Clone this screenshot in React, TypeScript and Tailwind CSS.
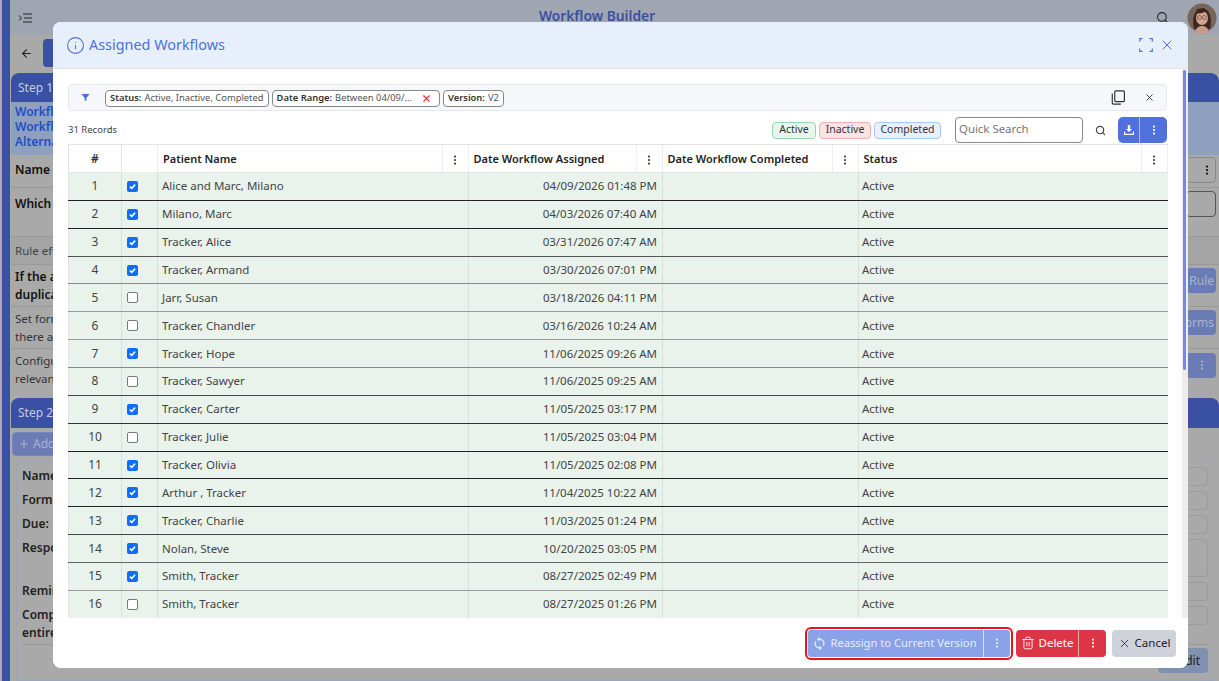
import React from "react";
import { ArrowLeft, EllipsisVertical, Info, Plus, Search, Trash2, X } from "lucide-react";
import { MdSync } from "react-icons/md";

const rows = [
  { name: "Alice and Marc, Milano", date: "04/09/2026 01:48 PM", checked: true, line: "border-b-[#222]" },
  { name: "Milano, Marc", date: "04/03/2026 07:40 AM", checked: true, line: "border-b-[#222]" },
  { name: "Tracker, Alice", date: "03/31/2026 07:47 AM", checked: true, line: "border-b-[#555]" },
  { name: "Tracker, Armand", date: "03/30/2026 07:01 PM", checked: true, line: "border-b-[#888]" },
  { name: "Jarr, Susan", date: "03/18/2026 04:11 PM", checked: false, line: "border-b-[#999]" },
  { name: "Tracker, Chandler", date: "03/16/2026 10:24 AM", checked: false, line: "border-b-[#999]" },
  { name: "Tracker, Hope", date: "11/06/2025 09:26 AM", checked: true, line: "border-b-[#888]" },
  { name: "Tracker, Sawyer", date: "11/06/2025 09:25 AM", checked: false, line: "border-b-[#444]" },
  { name: "Tracker, Carter", date: "11/05/2025 03:17 PM", checked: true, line: "border-b-[#333]" },
  { name: "Tracker, Julie", date: "11/05/2025 03:04 PM", checked: false, line: "border-b-[#222]" },
  { name: "Tracker, Olivia", date: "11/05/2025 02:08 PM", checked: true, line: "border-b-[#222]" },
  { name: "Arthur , Tracker", date: "11/04/2025 10:22 AM", checked: true, line: "border-b-[#222]" },
  { name: "Tracker, Charlie", date: "11/03/2025 01:24 PM", checked: true, line: "border-b-[#444]" },
  { name: "Nolan, Steve", date: "10/20/2025 03:05 PM", checked: true, line: "border-b-[#666]" },
  { name: "Smith, Tracker", date: "08/27/2025 02:49 PM", checked: true, line: "border-b-[#999]" },
  { name: "Smith, Tracker", date: "08/27/2025 01:26 PM", checked: false, line: "border-b-transparent" },
];

// right hand fields of the step 2 card, mostly covered by the modal
const stepFields = [
  { label: "Name", height: "h-[19px]" },
  { label: "Form", height: "h-[19px]" },
  { label: "Due:", height: "h-[19px]" },
  { label: "Respo", height: "h-[38px]" },
  { label: "Remin", height: "h-[19px]" },
  { label: "Comp", second: "entire", height: "h-[19px]" },
];

function Kebab({ className = "" }: { className?: string }) {
  return <EllipsisVertical className={`h-3 w-3 ${className}`} strokeWidth={2.5} />;
}

function Checkbox({ checked }: { checked: boolean }) {
  if (!checked) {
    return <span className="ml-[5px] block h-[11px] w-[11px] rounded-[2px] border border-[#777] bg-white" />;
  }
  return (
    <span className="ml-[5px] flex h-[11px] w-[11px] items-center justify-center rounded-[2px] bg-[#0d6efd]">
      <svg viewBox="0 0 12 12" className="h-[9px] w-[9px]" fill="none" stroke="white" strokeWidth="2">
        <path d="M2.5 6.2 5 8.5l4.5-5" />
      </svg>
    </span>
  );
}

function HeaderCell({ title }: { title: string }) {
  return (
    <th className="h-[28px] border-b border-[#e2e5e8] bg-white p-0 text-left font-semibold">
      <div className="flex h-[27px] items-center">
        <span className="min-w-0 flex-1 truncate pl-[5px] text-[11px] text-[#222]">{title}</span>
        <span className="flex h-full w-[27px] items-center justify-center border-l border-r border-[#eceef0] text-[#444]">
          <Kebab className="mt-[3px]" />
        </span>
      </div>
    </th>
  );
}

function Chip({ label, value, onClear }: { label: string; value: string; onClear?: boolean }) {
  return (
    <span className="flex h-[17px] items-center rounded-[4px] border border-[#888] bg-white px-[4px] text-[9.4px] whitespace-nowrap text-[#555]">
      <b className="mr-[3px] font-semibold text-[#333]">{label}</b>
      {value}
      {onClear && <X className="ml-[9px] mr-[3px] h-[11px] w-[11px] text-[#e8343c]" strokeWidth={2.5} />}
    </span>
  );
}

function Background() {
  return (
    <div className="flex h-full w-full bg-[#a9a9a9]">
      <div className="ml-[2px] w-[8px] shrink-0 bg-[#3a50a3]" />
      <div className="flex min-w-0 flex-1 flex-col">
        <div className="flex h-[35px] shrink-0 items-center bg-[#9fa6b2] pl-[8px] pr-[2px]">
          <svg viewBox="0 0 14 10" className="h-[10px] w-[14px]" fill="none" stroke="#222" strokeWidth="1">
            <path d="M1 2.5 3.5 5 1 7.5M5 1h9M6 5h8M5 9h9" />
          </svg>
          <span className="flex-1 pb-[3px] pl-[6px] text-center text-[13.8px] font-semibold text-[#3a50a3]">Workflow Builder</span>
          <Search className="mr-[18px] h-[13px] w-[13px] text-[#222]" />
          <svg viewBox="0 0 30 30" className="h-[30px] w-[30px]">
            <circle cx="15" cy="15" r="14.5" fill="#77655a" />
            <path d="M7 26c-2-8-1-20 8-20s10 12 8 20z" fill="#3c2620" />
            <ellipse cx="15" cy="15" rx="6" ry="7" fill="#d6a48d" />
            <path d="M9 10c3 1 8 0 10-2 1 2 2 3 2 5l1-4-5-4-7 1z" fill="#3c2620" />
            <path d="M8 30c1-6 4-7 7-7s6 1 7 7z" fill="#c99a87" />
            <circle cx="12.5" cy="14.5" r="2" fill="none" stroke="#4a3a36" strokeWidth=".6" />
            <circle cx="17.5" cy="14.5" r="2" fill="none" stroke="#4a3a36" strokeWidth=".6" />
          </svg>
        </div>
        <div className="flex h-[36px] shrink-0 items-center pl-[10px]">
          <ArrowLeft className="h-[13px] w-[13px] text-[#222]" />
          <span className="ml-[10px] h-[28px] w-[20px] rounded-[4px] bg-[#3a50a3]" />
        </div>
        <div className="mt-[2px] flex h-[321px] shrink-0 flex-col overflow-hidden rounded-t-[8px] pl-px">
          <div className="flex h-[29px] shrink-0 items-center rounded-t-[8px] bg-[#3a50a3] pl-[7px] text-[12px] text-[#c3cbe4]">Step 1:</div>
          <div className="h-[53px] shrink-0 bg-[#8f9fc0] pl-[4px] pt-[2px] text-[12px] leading-[15px] font-semibold text-[#1c4fc0]">
            <p>Workflow</p>
            <p>Workflow</p>
            <p>Alternate</p>
          </div>
          <div className="flex h-[33px] shrink-0 items-center justify-between border-b border-[#999] pb-[2px] pl-[4px] text-[12px] font-semibold text-[#111]">
            <span>Name of</span>
            <span className="mr-[3px] flex h-[26px] w-[30px] items-center justify-end rounded-[4px] border border-[#888] pr-[2px]">
              <Kebab />
            </span>
          </div>
          <div className="flex h-[33px] shrink-0 items-center justify-between pb-[2px] pl-[4px] text-[12px] font-semibold text-[#111]">
            <span>Which f</span>
            <span className="mr-[3px] h-[26px] w-[30px] rounded-[4px] border border-[#555]" />
          </div>
          <div className="h-[15px] shrink-0" />
          <div className="flex h-[29px] shrink-0 items-center border-y border-[#999] bg-[#a4a4a4] pl-[4px] text-[11.5px] text-[#444]">Rule eff</div>
          <div className="flex h-[42px] shrink-0 items-center justify-between border-b border-[#999] pl-[4px] text-[12px] leading-[18px] font-semibold text-[#111]">
            <span>
              If the ac
              <br />
              duplicat
            </span>
            <span className="mb-[10px] mr-[3px] flex h-[25px] w-[30px] items-center justify-end rounded-[4px] bg-[#6b7cb4] pr-[2px] text-[12px] font-normal text-[#a9b2d0]">Rule</span>
          </div>
          <div className="flex h-[42px] shrink-0 items-center justify-between border-b border-[#999] pl-[4px] text-[11.5px] leading-[18px] text-[#333]">
            <span>
              Set form
              <br />
              there ar
            </span>
            <span className="mb-[10px] mr-[3px] flex h-[25px] w-[30px] items-center justify-end overflow-hidden rounded-[4px] bg-[#6b7cb4] pr-[2px] text-[12px] text-[#a9b2d0]">orms</span>
          </div>
          <div className="flex h-[42px] shrink-0 items-center justify-between pl-[4px] text-[11.5px] leading-[18px] text-[#333]">
            <span>
              Configu
              <br />
              relevant
            </span>
            <span className="mb-[10px] mr-[3px] flex h-[25px] w-[30px] items-center justify-end rounded-[4px] bg-[#6b7cb4] pr-[8px] text-[#a9b2d0]">
              <Kebab />
            </span>
          </div>
        </div>
        <div className="mt-[4px] flex min-h-0 flex-1 flex-col pl-px">
          <div className="flex h-[30px] shrink-0 items-center rounded-t-[8px] bg-[#3a50a3] pl-[7px] text-[12px] text-[#c3cbe4]">Step 2:</div>
          <div className="flex h-[31px] shrink-0 items-center pl-px">
            <span className="flex h-[24px] w-[60px] items-center rounded-[4px] border border-[#7a88b8] bg-[#6b7cb4] pl-[5px] text-[12px] text-[#a9b2d0]">
              <Plus className="mr-[3px] h-[12px] w-[12px]" />
              Add
            </span>
          </div>
          <div className="mx-[5px] mt-px flex flex-1 flex-col rounded-t-[6px] border border-[#9aa5ba] px-[5px] pt-[6px] text-[12px] font-semibold text-[#222]">
            {stepFields.map((field) => (
              <div key={field.label} className="mb-[5px] flex items-start justify-between leading-[18px]">
                <span className="h-0">
                  {field.label}
                  {field.second && (
                    <>
                      <br />
                      {field.second}
                    </>
                  )}
                </span>
                <span className={`w-[50px] rounded-[4px] border border-[#9c9c9c] ${field.height}`} />
              </div>
            ))}
            <div className="mt-[14px] border-t border-[#999]" />
            <div className="mt-[3px] flex justify-end">
              <span className="flex h-[25px] w-[50px] items-center justify-end rounded-[4px] bg-[#7f90b0] pr-[8px] font-normal text-[#222]">Edit</span>
            </div>
          </div>
        </div>
      </div>
    </div>
  );
}

export default function App() {
  return (
    <div className="relative h-screen w-full overflow-hidden font-['Noto_Sans',sans-serif]">
      <Background />
      <div className="absolute left-[53px] top-[22px] flex h-[646px] w-[1135px] flex-col overflow-hidden rounded-[8px] bg-white">
        <div className="flex h-[47px] shrink-0 items-center border-b border-[#dfe3ea] bg-[#e8effc] pl-[13px] pr-[13px]">
          <Info className="h-[19px] w-[19px] text-[#4f70dd]" strokeWidth={1.4} />
          <span className="ml-[4px] flex-1 text-[14.4px] text-[#4f70dd]">Assigned Workflows</span>
          <svg viewBox="0 0 14 14" className="h-[14px] w-[14px]" fill="none" stroke="#4f70dd" strokeWidth="1.2">
            <path d="M.7 3.5V.7h2.8M10.500 .7h2.8v2.800M13.300 10.500v2.800h-2.800M3.500 13.300H.7v-2.800" />
          </svg>
          <X className="ml-[6px] h-[16px] w-[16px] text-[#4f70dd]" strokeWidth={1.5} />
        </div>

        <div className="relative flex min-h-0 flex-1 flex-col pl-[15px] pr-[21px]">
          <div className="absolute bottom-0 right-0 top-0 w-[6px] bg-[#f1ebeb]">
            <div className="ml-[1px] mt-[1px] h-[300px] w-[3px] rounded-full bg-[#6f8be8]" />
          </div>

          <div className="mt-[15px] flex h-[27px] shrink-0 items-center rounded-[4px] border border-[#e6e8ec] bg-[#f6f7fb] pl-[12px] pr-[12px]">
            <svg viewBox="0 0 10 10" className="mr-[15px] h-[9px] w-[9px]" fill="#4f70dd">
              <path d="M.5 1h9L6 5.500V9L4 8V5.500z" />
            </svg>
            <div className="mt-px flex flex-1 items-center gap-[3px]">
              <Chip label="Status:" value="Active, Inactive, Completed" />
              <Chip label="Date Range:" value="Between 04/09/..." onClear />
              <Chip label="Version:" value="V2" />
            </div>
            <svg viewBox="0 0 14 14" className="mr-[18px] h-[15px] w-[15px]" fill="none" stroke="#333" strokeWidth="1.1">
              <rect x="3.5" y=".8" width="9" height="10" rx="1" />
              <path d="M1.2 3.2v9a1 1 0 0 0 1 1h7" />
            </svg>
            <X className="mr-[-1px] h-[11px] w-[11px] text-[#333]" />
          </div>

          <div className="mb-px mt-[6px] flex h-[26px] shrink-0 items-center">
            <span className="flex-1 text-[9.5px] text-[#444]">31 Records</span>
            <div className="mr-[14px] flex items-center gap-[3px] text-[10.5px] text-[#333]">
              <span className="flex h-[17px] w-[44px] items-center justify-center rounded-[4px] border border-[#9bd3ae] bg-[#e9f6ee]">Active</span>
              <span className="flex h-[17px] w-[52px] items-center justify-center rounded-[4px] border border-[#efb0b0] bg-[#fbe3e3]">Inactive</span>
              <span className="flex h-[17px] w-[67px] items-center justify-center rounded-[4px] border border-[#a9c8f5] bg-[#e7f0fd]">Completed</span>
            </div>
            <input
              readOnly
              placeholder="Quick Search"
              className="h-[26px] w-[128px] rounded-[4px] border border-[#888] bg-white px-[3px] pb-[3px] text-[11.4px] outline-none placeholder:text-[#777]"
            />
            <Search className="ml-[12px] mr-[12px] h-[11px] w-[11px] text-[#444]" strokeWidth={2.5} />
            <div className="flex h-[26px] w-[49px] overflow-hidden rounded-[5px] bg-[#4f70dd] text-white">
              <span className="flex w-[22px] items-center justify-center border-r border-[#a9baf0]">
                <svg viewBox="0 0 12 12" className="h-[12px] w-[12px]" fill="white">
                  <path d="M4.800 1h2.400v4H9L6 8 3 5h1.800zM1 7.500h1.200v2.300h7.600V7.500H11V11H1z" />
                </svg>
              </span>
              <span className="flex flex-1 items-center justify-center">
                <Kebab />
              </span>
            </div>
          </div>

          <table className="w-[1099px] table-fixed border-collapse border-l border-t border-[#e2e5e8] text-[11.5px] leading-[16px] text-[#444]">
            <colgroup>
              <col className="w-[53px]" />
              <col className="w-[36px]" />
              <col className="w-[311px]" />
              <col className="w-[194px]" />
              <col className="w-[196px]" />
              <col className="w-[309px]" />
            </colgroup>
            <thead>
              <tr>
                <th className="h-[28px] border-b border-r border-[#e2e5e8] bg-white p-0 text-center text-[12px] font-semibold text-[#333]">#</th>
                <th className="border-b border-r border-[#eceef0] bg-white p-0" />
                <HeaderCell title="Patient Name" />
                <HeaderCell title="Date Workflow Assigned" />
                <HeaderCell title="Date Workflow Completed" />
                <HeaderCell title="Status" />
              </tr>
            </thead>
            <tbody>
              {rows.map((row, i) => (
                <tr key={i} className="h-[27.87px] bg-[#e9f3ec]">
                  <td className={`border-b border-r border-r-[#d8e0da] p-0 text-center text-[12px] ${row.line}`}>{i + 1}</td>
                  <td className={`border-b border-r border-r-[#d8e0da] p-0 ${row.line}`}>
                    <Checkbox checked={row.checked} />
                  </td>
                  <td className={`border-b border-r border-r-[#d8e0da] py-0 pl-[4px] pr-0 ${row.line}`}>{row.name}</td>
                  <td className={`border-b border-r border-r-[#d8e0da] py-0 pl-0 pr-[5px] text-right ${row.line}`}>{row.date}</td>
                  <td className={`border-b border-r border-r-[#d8e0da] p-0 ${row.line}`} />
                  <td className={`border-b py-0 pl-[3px] pr-0 ${row.line}`}>Active</td>
                </tr>
              ))}
            </tbody>
          </table>
        </div>

        <div className="z-10 flex h-[50px] shrink-0 items-center justify-end bg-white pr-[12px] text-[11.5px]">
          <div className="mr-[3px] rounded-[6px] border-2 border-[#f0101a] p-px">
            <div className="flex h-[27px] w-[202px] items-center rounded-[3px] bg-[#8aa2e8] text-[#e6ecfb]">
              <span className="flex flex-1 items-center justify-center self-stretch border-r border-[#d7e0f8] pr-[2px] text-[11.2px]">
                <MdSync className="mr-[3px] h-[15px] w-[15px]" />
                Reassign to Current Version
              </span>
              <span className="flex w-[26px] items-center justify-center">
                <Kebab />
              </span>
            </div>
          </div>
          <div className="flex h-[27px] w-[90px] items-center rounded-[4px] bg-[#dc3545] text-white">
            <span className="flex flex-1 items-center justify-center self-stretch border-r border-[#f0a3ab]">
              <Trash2 className="mr-[4px] h-[14px] w-[14px]" strokeWidth={1.5} />
              Delete
            </span>
            <span className="flex w-[27px] items-center justify-center">
              <Kebab />
            </span>
          </div>
          <div className="ml-[6px] flex h-[27px] w-[64px] items-center justify-center rounded-[4px] bg-[#ced2da] text-[#222]">
            <X className="mr-[4px] h-[13px] w-[13px]" strokeWidth={1.5} />
            Cancel
          </div>
        </div>
      </div>
    </div>
  );
}
